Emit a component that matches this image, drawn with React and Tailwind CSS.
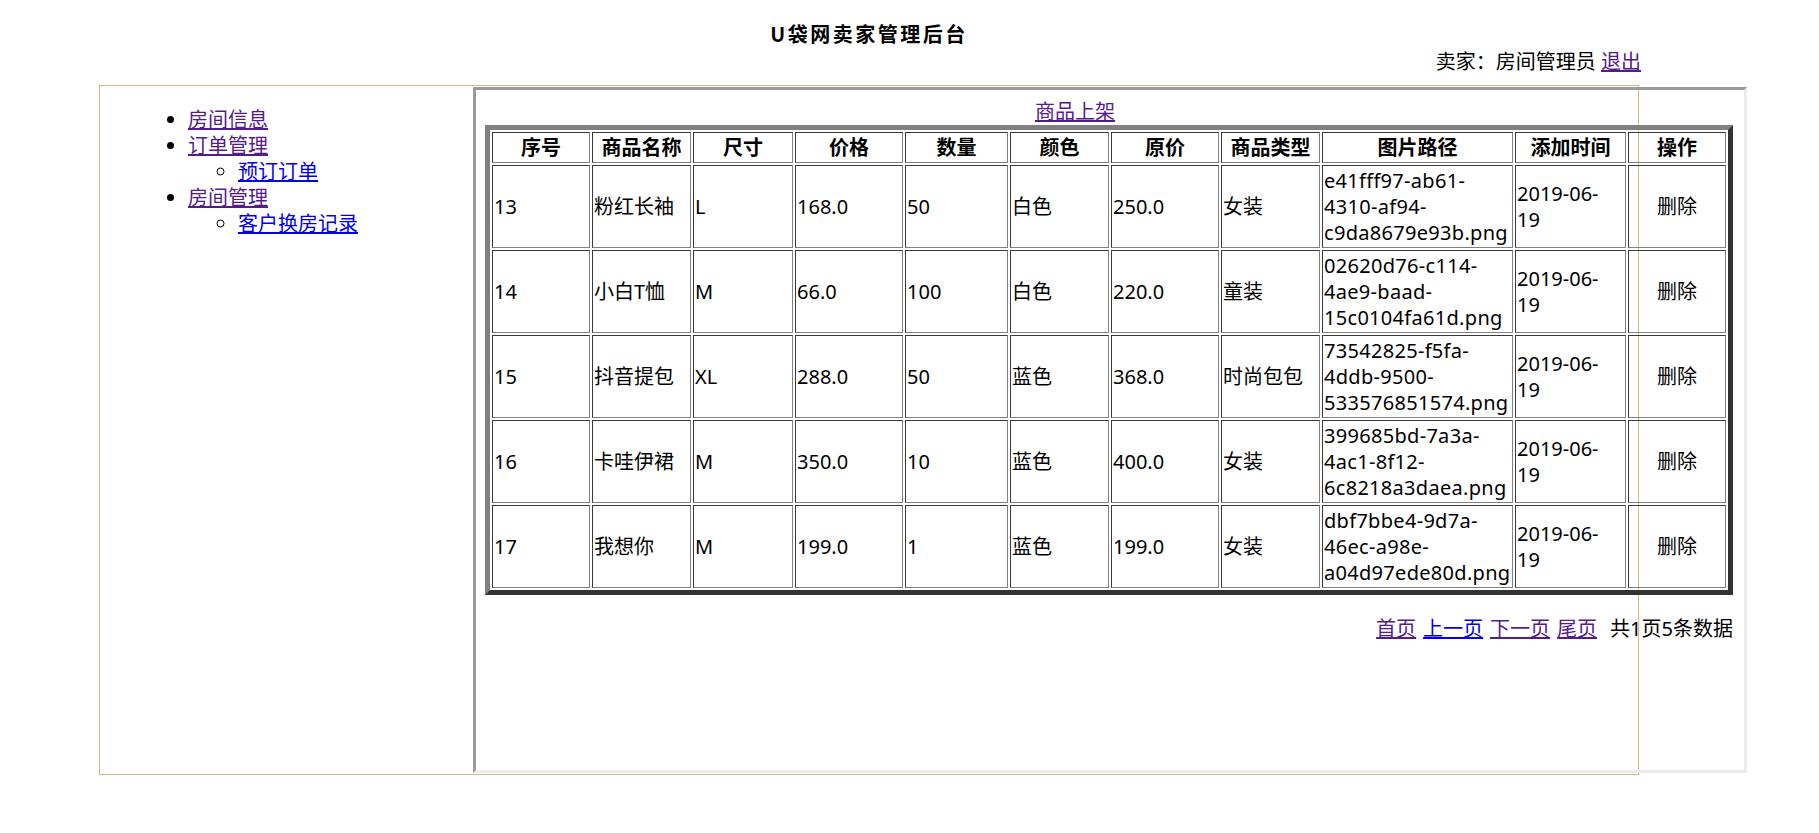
import React from "react";

const rows = [
  ["13", "粉红长袖", "L", "168.0", "50", "白色", "250.0", "女装", ["e41fff97-ab61-", "4310-af94-", "c9da8679e93b.png"]],
  ["14", "小白T恤", "M", "66.0", "100", "白色", "220.0", "童装", ["02620d76-c114-", "4ae9-baad-", "15c0104fa61d.png"]],
  ["15", "抖音提包", "XL", "288.0", "50", "蓝色", "368.0", "时尚包包", ["73542825-f5fa-", "4ddb-9500-", "533576851574.png"]],
  ["16", "卡哇伊裙", "M", "350.0", "10", "蓝色", "400.0", "女装", ["399685bd-7a3a-", "4ac1-8f12-", "6c8218a3daea.png"]],
  ["17", "我想你", "M", "199.0", "1", "蓝色", "199.0", "女装", ["dbf7bbe4-9d7a-", "46ec-a98e-", "a04d97ede80d.png"]],
];

const headers = [
  ["序号", "w-[98px]"],
  ["商品名称", "w-[99px]"],
  ["尺寸", "w-[100px]"],
  ["价格", "w-[108px]"],
  ["数量", "w-[103px]"],
  ["颜色", "w-[99px]"],
  ["原价", "w-[108px]"],
  ["商品类型", "w-[99px]"],
  ["图片路径", "w-[191px]"],
  ["添加时间", "w-[111px]"],
  ["操作", "w-[98px]"],
];

const cell =
  "border border-t-[#3a3a3a] border-l-[#3a3a3a] border-r-[#808080] border-b-[#808080] p-[1px] align-middle";

export default function App() {
  return (
    <div className="min-h-[833px] bg-white text-black text-[20px] font-['Noto_Sans','Noto_Sans_CJK_SC',sans-serif]">
      <div className="ml-[99px] w-[1540px]">
        <div className="pt-[21px] text-center font-bold leading-[26px] tracking-[2.5px] font-['Noto_Sans_CJK_SC',serif]">
          U袋网卖家管理后台
        </div>
        <div className="mt-[2px] w-[1542px] text-right leading-[26px]">
          卖家：房间管理员 <a href="#" className="text-[#551a8b] underline">退出</a>
        </div>
        <div className="mt-[10px] flex h-[690px] border border-[#e0b47e] py-[1px]">
          <div className="w-[373px] shrink-0">
            <ul className="mt-[20px] list-disc pl-[88px] leading-[26px]">
              <li>
                <a href="#" className="text-[#551a8b] underline">房间信息</a>
              </li>
              <li>
                <a href="#" className="text-[#551a8b] underline">订单管理</a>
                <ul className="list-[circle] pl-[50px]">
                  <li>
                    <a href="#" className="text-[#0000ee] underline">预订订单</a>
                  </li>
                </ul>
              </li>
              <li>
                <a href="#" className="text-[#551a8b] underline">房间管理</a>
                <ul className="list-[circle] pl-[50px]">
                  <li>
                    <a href="#" className="text-[#0000ee] underline">客户换房记录</a>
                  </li>
                </ul>
              </li>
            </ul>
          </div>
          <div className="h-[686px] w-[1274px] shrink-0 border-[3px] border-t-[#9a9a9a] border-l-[#9a9a9a] border-r-[#ebebeb] border-b-[#ebebeb]">
            <div className="pt-[9px] pl-[559px] leading-[26px]">
              <a href="#" className="text-[#551a8b] underline">商品上架</a>
            </div>
            <table className="ml-[9px] w-[1248px] table-fixed border-separate border-spacing-[2px] border-[5px] border-t-[#808080] border-l-[#808080] border-r-[#333333] border-b-[#333333] leading-[26px]">
              <thead>
                <tr>
                  {headers.map(([h, w]) => (
                    <th key={h} className={`${cell} ${w} h-[31px] text-center font-bold`}>
                      {h}
                    </th>
                  ))}
                </tr>
              </thead>
              <tbody>
                {rows.map((r) => (
                  <tr key={r[0]}>
                    {r.slice(0, 8).map((v, i) => (
                      <td key={i} className={`${cell} h-[83px] text-left`}>
                        {v}
                      </td>
                    ))}
                    <td className={`${cell} h-[83px] text-left whitespace-nowrap tracking-[0.3px]`}>
                      {r[8][0]}
                      <br />
                      {r[8][1]}
                      <br />
                      {r[8][2]}
                    </td>
                    <td className={`${cell} h-[83px] text-left whitespace-nowrap`}>
                      2019-06-
                      <br />
                      19
                    </td>
                    <td className={`${cell} h-[83px] text-center`}>删除</td>
                  </tr>
                ))}
              </tbody>
            </table>
            <div className="ml-[9px] mt-[21px] w-[1248px] text-right leading-[26px] whitespace-nowrap">
              <a href="#" className="text-[#551a8b] underline">首页</a>
              <a href="#" className="ml-[7px] text-[#0000ee] underline">上一页</a>
              <a href="#" className="ml-[7px] text-[#551a8b] underline">下一页</a>
              <a href="#" className="ml-[7px] text-[#551a8b] underline">尾页</a>
              <span className="ml-[13px]">共1页5条数据</span>
            </div>
          </div>
        </div>
      </div>
    </div>
  );
}
